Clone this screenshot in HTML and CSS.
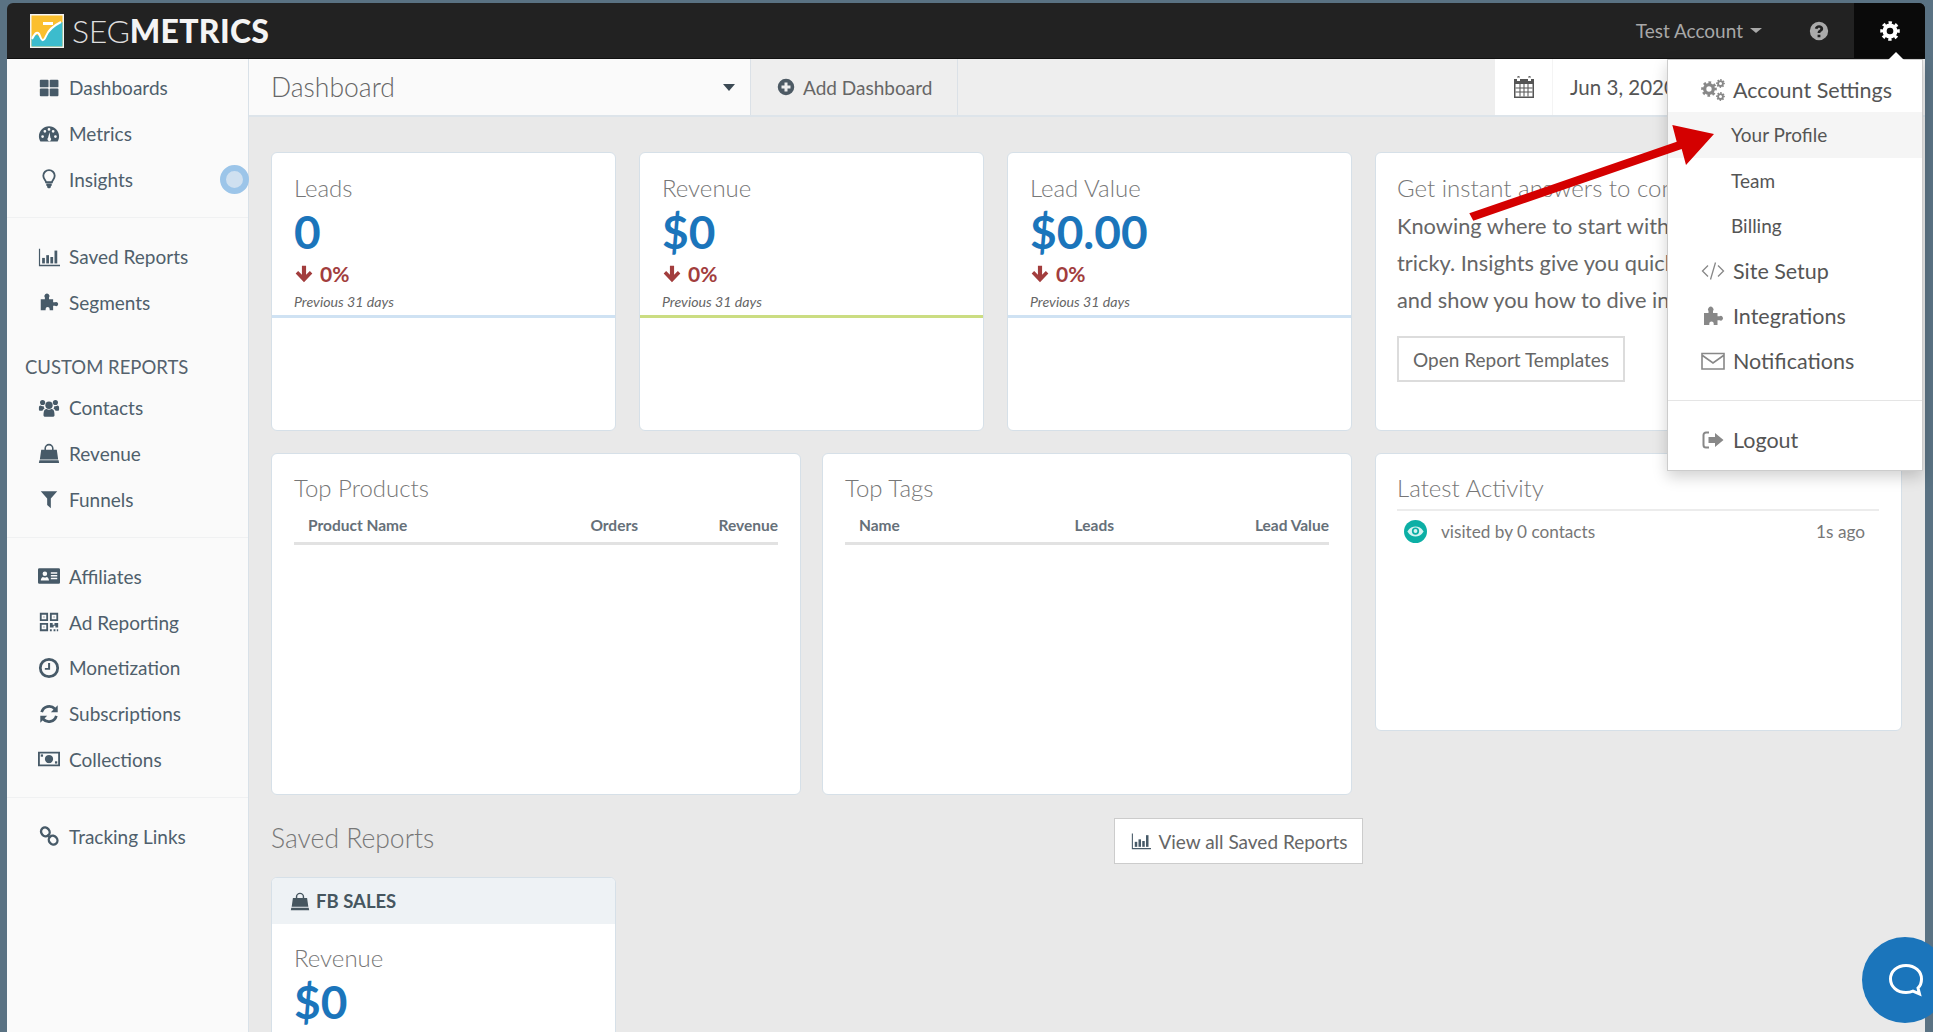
FILE: index.html
```html
<!DOCTYPE html>
<html lang="en">
<head>
<meta charset="utf-8">
<title>SegMetrics Dashboard</title>
<link rel="stylesheet" href="styles.css">
</head>
<body>
<svg class="defs" aria-hidden="true">
  <symbol id="i-grid" viewBox="0 0 24 24"><rect x="2" y="3" width="9.5" height="8.3" rx="1"/><rect x="12.8" y="3" width="9.5" height="8.3" rx="1"/><rect x="2" y="12.6" width="9.5" height="8.3" rx="1"/><rect x="12.8" y="12.6" width="9.5" height="8.3" rx="1"/></symbol>
  <symbol id="i-gauge" viewBox="0 0 24 24"><path fill-rule="evenodd" d="M12 3.5C5.9 3.5 1 8.4 1 14.5c0 2.1.6 4 1.6 5.6h18.8c1-1.6 1.6-3.500 1.600-5.600C23 8.400 18.100 3.500 12 3.500zM5 13.300a1.500 1.500 0 1 1 0 3 1.500 1.500 0 0 1 0-3zM7.500 7.500a1.500 1.500 0 1 1 0 3 1.500 1.500 0 0 1 0-3zM13.500 7a1.500 1.500 0 1 0-3 0 1.500 1.500 0 0 0 3 0zM16.500 7.500a1.500 1.500 0 1 1 0 3 1.500 1.500 0 0 1 0-3zM19 13.300a1.500 1.500 0 1 1 0 3 1.500 1.500 0 0 1 0-3zM12.600 10l.9 6.100a2 2 0 1 1-2.500.1z"/></symbol>
  <symbol id="i-bulb" viewBox="0 0 24 24"><path fill="none" stroke="currentColor" stroke-width="2" d="M8.800 15.500c-.3-2-3-3.600-3-7a6.200 6.200 0 0 1 12.400 0c0 3.400-2.700 5-3 7z"/><path d="M9 17h6v2.200l-1 .8v1.300l-2 1-2-1V20l-1-.8z"/></symbol>
  <symbol id="i-bars" viewBox="0 0 24 24"><path d="M1 3h1.300v17.500H24V22H1z"/><rect x="4.500" y="13" width="3" height="6"/><rect x="9" y="10" width="3" height="9"/><rect x="13.500" y="12" width="3" height="7"/><rect x="18" y="5" width="3" height="14"/></symbol>
  <symbol id="i-puzzle" viewBox="0 0 24 24"><path d="M3 9h4.500V7.200a2.800 2.800 0 1 1 4.500 0V9h4.500v3.300h2a2.300 2.300 0 1 1 0 3.900h-2V21h-3.800v-1.400a2.200 2.200 0 1 0-4.400 0V21H3z"/></symbol>
  <symbol id="i-users" viewBox="0 0 24 24"><circle cx="12" cy="9" r="4"/><path d="M6.500 15.500c.5-1.700 2-2.300 3-2.300 1.500 1 3.500 1 5 0 1 0 2.500.6 3 2.300.4 1.400.5 3.200.5 4.300 0 1-.8 1.700-1.800 1.700H7.800C6.800 21.500 6 20.800 6 19.800c0-1.100.1-2.900.5-4.300z"/><circle cx="5" cy="6" r="2.800"/><circle cx="19" cy="6" r="2.800"/><path d="M1 11.500c0-1.400.8-2.300 1.800-2.300 1 .8 2.400 1 3.500.6-.3 1 .2 2 .9 2.700-1.200.5-2 1.400-2.400 2.600H2.500C1.500 15.100 1 14.500 1 13.500zM23 11.500c0-1.400-.8-2.300-1.800-2.300-1 .8-2.400 1-3.500.6.300 1-.2 2-.9 2.700 1.200.5 2 1.400 2.400 2.600h2.300c1 0 1.500-.6 1.500-1.600z"/></symbol>
  <symbol id="i-bag" viewBox="0 0 24 24"><path fill-rule="evenodd" d="M3.500 8.500H7V7a5 5 0 0 1 10 0v1.500h3.500L22 19H2zM8.700 8.500h6.600V7a3.300 3.300 0 0 0-6.600 0z"/><path d="M1.500 20h21l.5 3H1z"/></symbol>
  <symbol id="i-filter" viewBox="0 0 24 24"><path d="M3 3.500h18l-7 8v10.500l-4-3.500v-7z"/></symbol>
  <symbol id="i-card" viewBox="0 0 24 24"><path fill-rule="evenodd" d="M1.500 3.500h21A1.500 1.500 0 0 1 24 5v14a1.500 1.500 0 0 1-1.500 1.500h-21A1.500 1.500 0 0 1 0 19V5a1.500 1.500 0 0 1 1.500-1.500zM7.500 7a2.500 2.500 0 1 0 0 5 2.500 2.500 0 0 0 0-5zM3 17h9c0-2.500-1.500-4-2.500-4-1.300.8-2.700.8-4 0C4.500 13 3 14.500 3 17zM14 8v1.500h7V8zM14 11v1.500h7V11zM14 14v1.500h7V14z"/></symbol>
  <symbol id="i-qr" viewBox="0 0 24 24"><path fill-rule="evenodd" d="M2 2h9v9H2zM4 4v5h5V4zM13 2h9v9h-9zM15 4v5h5V4zM2 13h9v9H2zM4 15v5h5v-5zM6 6h1v1H6zM17 6h1v1h-1zM6 17h1v1H6z"/><path d="M13 13h3v2h2v-2h4v5h-3v-2h-2v2h-4zM13 20h2v2h-2zM17 20h2v2h-2zM20.500 20H22v2h-1.500z"/></symbol>
  <symbol id="i-clock" viewBox="0 0 24 24"><circle cx="12" cy="12" r="9.500" fill="none" stroke="currentColor" stroke-width="3"/><path d="M11 6.500h2.200V14H7.500v-2H11z"/></symbol>
  <symbol id="i-refresh" viewBox="0 0 24 24"><path fill="none" stroke="currentColor" stroke-width="3" d="M4 10a8.500 8.500 0 0 1 14.500-3.500M20 14a8.500 8.500 0 0 1-14.500 3.500"/><path d="M21.500 2.500V10H14zM2.500 21.500V14H10z"/></symbol>
  <symbol id="i-money" viewBox="0 0 24 24"><path fill-rule="evenodd" d="M0 4h24v16H0zM2 6v12h20V6zM12 7.500a4.500 4.500 0 1 0 0 9 4.500 4.500 0 0 0 0-9z"/><rect x="11" y="9.500" width="2" height="5"/><rect x="3" y="7" width="2.500" height="2.500"/><rect x="18.500" y="14.500" width="2.500" height="2.500"/></symbol>
  <symbol id="i-link" viewBox="0 0 24 24"><g fill="none" stroke="currentColor" stroke-width="2.600"><ellipse cx="8" cy="7.500" rx="4.500" ry="5" transform="rotate(-40 8 7.500)"/><ellipse cx="16.500" cy="16.500" rx="4.500" ry="5" transform="rotate(-40 16.500 16.500)"/></g><path d="M11 10l3 4-1.500 1-3-4z"/></symbol>
  <symbol id="i-plus" viewBox="0 0 24 24"><path fill-rule="evenodd" d="M12 1a11 11 0 1 0 0 22 11 11 0 0 0 0-22zM10 6h4v4h4v4h-4v4h-4v-4H6v-4h4z"/></symbol>
  <symbol id="i-cal" viewBox="0 0 24 24"><path fill-rule="evenodd" d="M2 4h3V2.500a1.500 1.500 0 0 1 3 0V4h8V2.500a1.500 1.500 0 0 1 3 0V4h3v19H2zM3.500 9v12.500h17V9zM5 2.500V6h3V2.500zM16 2.500V6h3V2.500z"/><path d="M3.500 12.500h17v1h-17zM3.500 16.500h17v1h-17zM7.500 9h1v12.500h-1zM11.500 9h1v12.500h-1zM15.500 9h1v12.500h-1z"/></symbol>
  <symbol id="i-gear" viewBox="0 0 24 24"><circle cx="12" cy="12" r="6.500" fill="none" stroke="currentColor" stroke-width="5"/><circle cx="12" cy="12" r="9.500" fill="none" stroke="currentColor" stroke-width="4.500" stroke-dasharray="3.730 3.730" transform="rotate(-11.250 12 12)"/></symbol>
  <symbol id="i-cogs" viewBox="0 0 24 24"><use href="#i-gear" x="0" y="3" width="16" height="16"/><use href="#i-gear" x="15" y="1" width="9" height="9"/><use href="#i-gear" x="15" y="14" width="9" height="9"/></symbol>
  <symbol id="i-code" viewBox="0 0 24 24"><path fill="none" stroke="currentColor" stroke-width="1.300" d="M7 6.500L1.500 12 7 17.500M17 6.500l5.500 5.500-5.500 5.500M14.500 3.500l-5 17"/></symbol>
  <symbol id="i-mail" viewBox="0 0 24 24"><path fill="none" stroke="currentColor" stroke-width="1.600" d="M1 4.500h22v15.500H1zM1.500 6.500L12 14 22.500 6.500"/></symbol>
  <symbol id="i-logout" viewBox="0 0 24 24"><path fill="none" stroke="currentColor" stroke-width="2" d="M8 4.500H5A2.500 2.500 0 0 0 2.500 7v10A2.500 2.500 0 0 0 5 19.500h3"/><path d="M14 5l8.500 7-8.500 7v-4H7.500V9H14z"/></symbol>
  <symbol id="i-help" viewBox="0 0 24 24"><path fill-rule="evenodd" d="M12 1a11 11 0 1 0 0 22 11 11 0 0 0 0-22zM10.300 16.500h3.400v3h-3.400zM7 9c.4-2.500 2.400-4 5-4 2.800 0 5 1.800 5 4.200 0 2-1.200 2.800-2.200 3.500-.8.500-1.100.8-1.100 1.800h-3.400c0-2.200 1-3.100 2-3.800.8-.5 1.300-.9 1.300-1.500 0-.7-.7-1.200-1.600-1.200-1 0-1.500.6-1.800 1.500z"/></symbol>
  <symbol id="i-down" viewBox="0 0 24 24"><path d="M9.500 2h5v11l4.500-4.500 3 3L12 22 2 11.500l3-3L9.500 13z"/></symbol>
</svg>

<div class="app">
  <header class="topnav">
    <div class="brand">
      <svg class="logo" viewBox="0 0 34 34" aria-hidden="true">
        <rect width="34" height="34" fill="#f4f4f4"/>
        <rect x="1.500" y="1.500" width="31" height="31" fill="#fbbf2e"/>
        <path d="M1.500 24c3-3 5-5 8-1s5 4 8-2 5-10 15-13v24.500h-31z" fill="#3cbccd"/>
        <path d="M2 25c3-6 6-9 8-3s4 5 6 0 5-9 15-14" fill="none" stroke="#fff" stroke-width="2"/>
        <rect x="13" y="8" width="10" height="3" fill="#fff"/>
      </svg>
      <span class="wordmark">SEG<b>METRICS</b></span>
    </div>
    <div class="account">Test Account <i class="caret caret-light"></i></div>
    <div class="help"><svg class="ic"><use href="#i-help"/></svg></div>
    <div class="settings"><svg class="ic"><use href="#i-gear"/></svg></div>
  </header>

  <div class="layout">
    <aside class="sidebar">
      <nav class="group group-first">
        <a class="item"><svg class="ic"><use href="#i-grid"/></svg>Dashboards</a>
        <a class="item"><svg class="ic"><use href="#i-gauge"/></svg>Metrics</a>
        <a class="item item-pulse"><svg class="ic"><use href="#i-bulb"/></svg>Insights<span class="pulse"></span></a>
      </nav>
      <nav class="group">
        <a class="item"><svg class="ic"><use href="#i-bars"/></svg>Saved Reports</a>
        <a class="item"><svg class="ic"><use href="#i-puzzle"/></svg>Segments</a>
        <div class="group-title">CUSTOM REPORTS</div>
        <a class="item"><svg class="ic"><use href="#i-users"/></svg>Contacts</a>
        <a class="item"><svg class="ic"><use href="#i-bag"/></svg>Revenue</a>
        <a class="item"><svg class="ic"><use href="#i-filter"/></svg>Funnels</a>
      </nav>
      <nav class="group">
        <a class="item"><svg class="ic"><use href="#i-card"/></svg>Affiliates</a>
        <a class="item"><svg class="ic"><use href="#i-qr"/></svg>Ad Reporting</a>
        <a class="item"><svg class="ic"><use href="#i-clock"/></svg>Monetization</a>
        <a class="item"><svg class="ic"><use href="#i-refresh"/></svg>Subscriptions</a>
        <a class="item"><svg class="ic"><use href="#i-money"/></svg>Collections</a>
      </nav>
      <nav class="group group-last">
        <a class="item"><svg class="ic"><use href="#i-link"/></svg>Tracking Links</a>
      </nav>
    </aside>

    <main class="main">
      <div class="toolbar">
        <div class="picker"><span class="picker-name">Dashboard</span><i class="caret"></i></div>
        <div class="add"><svg class="ic"><use href="#i-plus"/></svg>Add Dashboard</div>
        <div class="spacer"></div>
        <div class="cal"><svg class="ic"><use href="#i-cal"/></svg></div>
        <div class="date">Jun 3, 2020 - Jul 3, 2020</div>
      </div>

      <div class="content">
        <div class="dash">
          <section class="stats">
            <article class="card stat">
              <h3 class="title">Leads</h3>
              <div class="value">0</div>
              <div class="delta"><svg class="ic"><use href="#i-down"/></svg>0%</div>
              <div class="prev">Previous 31 days</div>
              <div class="rule rule-blue"></div>
            </article>
            <article class="card stat">
              <h3 class="title">Revenue</h3>
              <div class="value">$0</div>
              <div class="delta"><svg class="ic"><use href="#i-down"/></svg>0%</div>
              <div class="prev">Previous 31 days</div>
              <div class="rule rule-green"></div>
            </article>
            <article class="card stat">
              <h3 class="title">Lead Value</h3>
              <div class="value">$0.00</div>
              <div class="delta"><svg class="ic"><use href="#i-down"/></svg>0%</div>
              <div class="prev">Previous 31 days</div>
              <div class="rule rule-blue"></div>
            </article>
          </section>

          <article class="card insight">
            <div class="insight-clip">
              <h3 class="title">Get instant answers to common questions</h3>
              <p class="insight-text">Knowing where to start with your data can be<br>tricky. Insights give you quick answers<br>and show you how to dive into the details.</p>
            </div>
            <a class="btn">Open Report Templates</a>
          </article>

          <section class="tops">
            <article class="card top">
              <h3 class="title">Top Products</h3>
              <div class="thead"><span class="th-main">Product Name</span><span>Orders</span><span class="th-end">Revenue</span></div>
            </article>
            <article class="card top">
              <h3 class="title">Top Tags</h3>
              <div class="thead"><span class="th-main">Name</span><span>Leads</span><span class="th-end th-wide">Lead Value</span></div>
            </article>
          </section>

          <article class="card activity">
            <h3 class="title activity-title">Latest Activity</h3>
            <div class="activity-row">
              <svg class="eye" viewBox="0 0 24 24" aria-hidden="true"><circle cx="12" cy="12" r="12" fill="#0cafa5"/><path d="M3.500 12C6 8 9 6.800 12 6.800S18 8 20.500 12C18 16 15 17.200 12 17.200S6 16 3.500 12z" fill="#d6f3f1"/><circle cx="12" cy="11.500" r="3.800" fill="#0cafa5"/><circle cx="12" cy="11.500" r="2" fill="#d6f3f1"/></svg>
              <span class="activity-text">visited by 0 contacts</span>
              <span class="activity-time">1s ago</span>
            </div>
          </article>
        </div>

        <div class="saved-head">
          <h2 class="saved-title">Saved Reports</h2>
          <a class="btn btn-white"><svg class="ic"><use href="#i-bars"/></svg>View all Saved Reports</a>
        </div>

        <article class="card report">
          <div class="report-head"><svg class="ic"><use href="#i-bag"/></svg>FB SALES</div>
          <div class="report-body">
            <h3 class="title">Revenue</h3>
            <div class="value">$0</div>
          </div>
        </article>
      </div>
    </main>
  </div>

  <div class="menu">
    <span class="menu-arrow"></span>
    <a class="menu-item menu-lead"><svg class="ic"><use href="#i-cogs"/></svg>Account Settings</a>
    <a class="menu-item menu-sub menu-hover">Your Profile</a>
    <a class="menu-item menu-sub">Team</a>
    <a class="menu-item menu-sub">Billing</a>
    <a class="menu-item menu-lead"><svg class="ic"><use href="#i-code"/></svg>Site Setup</a>
    <a class="menu-item menu-lead"><svg class="ic"><use href="#i-puzzle"/></svg>Integrations</a>
    <a class="menu-item menu-lead"><svg class="ic"><use href="#i-mail"/></svg>Notifications</a>
    <div class="menu-divider"></div>
    <a class="menu-item menu-lead"><svg class="ic"><use href="#i-logout"/></svg>Logout</a>
  </div>
</div>

<svg class="annotation" viewBox="0 0 1933 1032" aria-hidden="true">
  <polygon points="1469.3,213.3 1676.7,141.7 1672.3,125 1714,134 1686,165 1681.7,149 1473.3,220.7" fill="#d40000"/>
</svg>

<div class="chat">
  <svg viewBox="0 0 40 40" aria-hidden="true"><path d="M20 5.500C11 5.500 4.500 11.500 4.500 19S11 32.500 20 32.500c2.500 0 5-.4 7-1.300l6.500 2.800-1.500-6c2.500-2.300 3.500-5.300 3.500-9C35.500 11.500 29 5.500 20 5.500z" fill="none" stroke="#fff" stroke-width="3"/></svg>
</div>
</body>
</html>
```
FILE: styles.css
```css
* { box-sizing: border-box; }
html, body { height: 100%; }
body {
  margin: 0;
  padding: 3px 8px 0 7px;
  background: #5a7283;
  overflow: hidden;
  font-family: "Lato", "Noto Sans", sans-serif;
  font-size: 17px;
  color: #555;
}
.defs { position: absolute; width: 0; height: 0; }
.ic { fill: currentColor; display: block; flex: none; }

.app {
  position: relative;
  height: 100%;
  display: flex;
  flex-direction: column;
  border-radius: 6px 6px 0 0;
}

/* top nav */
.topnav {
  height: 56px;
  flex: none;
  display: flex;
  align-items: center;
  background: #222;
  color: #aaa;
  border-radius: 6px 6px 0 0;
  border-bottom: 1px solid #111;
}
.brand { display: flex; align-items: center; padding-left: 23px; margin-right: auto; }
.logo { width: 34px; height: 34px; display: block; margin-right: 8px; }
.wordmark { font-size: 32px; font-weight: 300; color: #ddd; letter-spacing: -.3px; line-height: 1; }
.wordmark b { font-weight: 900; color: #f4f4f4; letter-spacing: .3px; }
.account { font-size: 19px; display: flex; align-items: center; gap: 7px; color: #a8a8a8; margin-right: 47px; }
.help { width: 20px; margin-right: 25px; }
.help .ic { width: 20px; height: 20px; }
.settings {
  width: 71px; height: 100%;
  background: #0a0a0a; color: #fff;
  display: flex; align-items: center; justify-content: center;
  border-top-right-radius: 6px;
}
.settings .ic { width: 20px; height: 20px; }
.caret { width: 0; height: 0; border: 6px solid transparent; border-top: 7px solid #3c4a54; border-bottom: 0; display: block; }
.caret-light { border-top-color: #a8a8a8; border-width: 5px 6px 0; }

.layout { flex: 1; min-height: 0; display: flex; }

/* sidebar */
.sidebar {
  width: 242px; flex: none;
  background: #fafafa;
  border-right: 1px solid #d9e1e8;
}
.group { padding: 15.500px 0 15px; border-bottom: 1px solid #f0f1f2; }
.group-first { padding-top: 6px; }
.group-last { border-bottom: 0; padding-top: 15px; }
.item {
  height: 45.750px;
  display: flex; align-items: center;
  padding-left: 29px;
  position: relative;
  color: #4f5f6c;
  font-size: 19px;
}
.item .ic { width: 26px; height: 22px; margin-right: 7px; color: #475a68; padding: 0 2px; }
.group-title {
  height: 24px;
  margin: 30px 0 5.500px;
  padding-left: 18px;
  line-height: 24px;
  font-size: 18.500px;
  color: #55626d;
}
.pulse {
  position: absolute;
  right: -1px; top: 8px;
  width: 29px; height: 29px;
  border-radius: 50%;
  background: #cfe0f0;
  border: 6.500px solid #9cc5e9;
}

/* main */
.main { flex: 1; min-width: 0; display: flex; flex-direction: column; background: #e9e9e9; }
.toolbar {
  height: 58px; flex: none;
  display: flex;
  background: #eee;
  border-bottom: 2px solid #dde4ea;
}
.picker {
  width: 501px;
  background: #fafafa;
  display: flex; align-items: center; justify-content: space-between;
  padding: 0 15px 0 22px;
}
.picker-name { font-size: 26.500px; font-weight: 300; color: #666; }
.add {
  width: 208px;
  display: flex; align-items: center;
  padding-left: 26px;
  border-left: 1px solid #dbe1e7;
  border-right: 1px solid #dbe1e7;
  color: #666;
  font-size: 19px;
}
.add .ic { width: 18px; height: 18px; margin-right: 8px; color: #4d5a64; }
.spacer { flex: 1; }
.cal { width: 57px; background: #fff; display: flex; align-items: center; justify-content: center; color: #555; }
.cal .ic { width: 24px; height: 24px; }
.date {
  width: 116px;
  margin-right: 257px;
  background: #fff;
  border-left: 1px solid #f4f4f4;
  padding-left: 17px;
  display: flex; align-items: center;
  font-size: 20.500px;
  color: #555;
  white-space: nowrap;
  overflow: hidden;
}

.content { flex: 1; min-height: 0; padding: 35px 23px 0 22px; overflow: hidden; }
.dash {
  display: grid;
  grid-template-columns: 1081px 527px;
  grid-template-rows: 279px 342px;
  gap: 22px 23px;
}
.card {
  background: #fff;
  border: 1px solid #d6e0e8;
  border-radius: 6px;
  position: relative;
}
.title { margin: 0; font-size: 24px; font-weight: 300; color: #777; line-height: 30px; white-space: nowrap; }

.stats { display: grid; grid-template-columns: repeat(3, 345px); gap: 23px; height: 279px; }
.stat { padding: 20px 22px 0; overflow: hidden; }
.value { font-size: 46px; font-weight: 700; color: #1b75bb; line-height: 52px; margin-top: 3px; }
.delta { display: flex; align-items: center; gap: 6px; font-size: 21px; font-weight: 700; color: #a23d3d; line-height: 26px; margin-top: 3px; }
.delta .ic { width: 20px; height: 20px; }
.prev { font-size: 14.200px; font-style: italic; color: #666; line-height: 18px; margin-top: 6px; }
.rule { position: absolute; left: 0; right: 0; top: 162px; height: 3px; }
.rule-blue { background: #cfe2f3; }
.rule-green { background: #cbdd82; }

.insight { padding: 20px 0 0 21px; overflow: hidden; }
.insight-clip { width: 271px; overflow: hidden; }
.insight-text { margin: 4px 0 0; font-size: 21.800px; line-height: 37px; color: #666; white-space: nowrap; }
.btn {
  display: inline-flex; align-items: center; justify-content: center;
  height: 46px;
  border: 2px solid #dcdcdc;
  background: #fff;
  color: #666;
  font-size: 19px;
}
.insight .btn { width: 228px; margin-top: 18px; }

.tops { display: grid; grid-template-columns: 530px 530px; gap: 21px; height: 342px; }
.top { padding: 19px 22px 0; }
.thead {
  display: flex;
  margin: 11px 0 0;
  height: 31px;
  padding: 0 0 0 14px;
  border-bottom: 3px solid #e2e2e2;
  font-size: 15.500px;
  font-weight: 700;
  color: #667079;
  line-height: 22px;
}
.th-main { margin-right: auto; }
.th-end { width: 140px; text-align: right; }
.th-wide { width: 215px; }

.activity { height: 278px; padding: 19px 22px 0 21px; }
.activity-title { padding-bottom: 4px; border-bottom: 2px solid #ececec; height: 38px; }
.activity-row { display: flex; align-items: center; padding: 9px 14px 0 7px; font-size: 17.200px; color: #777; }
.eye { width: 23px; height: 23px; margin-right: 14px; display: block; }
.activity-text { margin-right: auto; }

.saved-head {
  width: 1092px;
  display: flex; align-items: center; justify-content: space-between;
  height: 46px;
  margin-top: 23px;
}
.saved-title { margin: 0 0 6px; font-size: 26.500px; font-weight: 300; color: #777; }
.btn-white { width: 249px; gap: 5px; border-width: 1px; border-color: #ccc; }
.btn-white .ic { width: 24px; height: 20px; color: #475a68; }

.report { width: 345px; margin-top: 13px; height: 200px; overflow: hidden; }
.report-head {
  height: 46px; background: #eef2f5;
  display: flex; align-items: center; gap: 6px;
  padding-left: 18px;
  font-size: 18.500px; font-weight: 700; color: #46565f;
}
.report-head .ic { width: 20px; height: 20px; }
.report-body { padding: 19px 22px 0; }

/* dropdown */
.menu {
  position: absolute;
  top: 56px; right: 2px;
  width: 256px; height: 412px;
  background: #fff;
  border: 1px solid #ccc;
  padding-top: 7px;
  box-shadow: 0 6px 14px rgba(0,0,0,.18);
  color: #555;
}
.menu-arrow {
  position: absolute;
  top: -8px; left: 220px;
  width: 0; height: 0;
  border: 8px solid transparent;
  border-top: 0;
  border-bottom-color: #fff;
}
.menu-item { height: 45.300px; display: flex; align-items: center; white-space: nowrap; }
.menu-lead { padding-left: 33px; font-size: 21.500px; }
.menu-lead .ic { width: 24px; height: 24px; margin-right: 8px; color: #888; }
.menu-sub { padding-left: 63px; font-size: 19px; }
.menu-hover { background: #f5f5f5; }
.menu-divider { height: 1px; background: #e5e5e5; margin: 16px 0; }

/* annotation + chat, laid over the page */
.annotation { position: absolute; left: 0; top: 0; width: 1933px; height: 1032px; pointer-events: none; }
.chat {
  position: absolute;
  left: 1862px; top: 937px;
  width: 86px; height: 86px;
  border-radius: 50%;
  background: #1b75bb;
}
.chat svg { position: absolute; left: 24px; top: 23px; width: 40px; height: 40px; }
```
